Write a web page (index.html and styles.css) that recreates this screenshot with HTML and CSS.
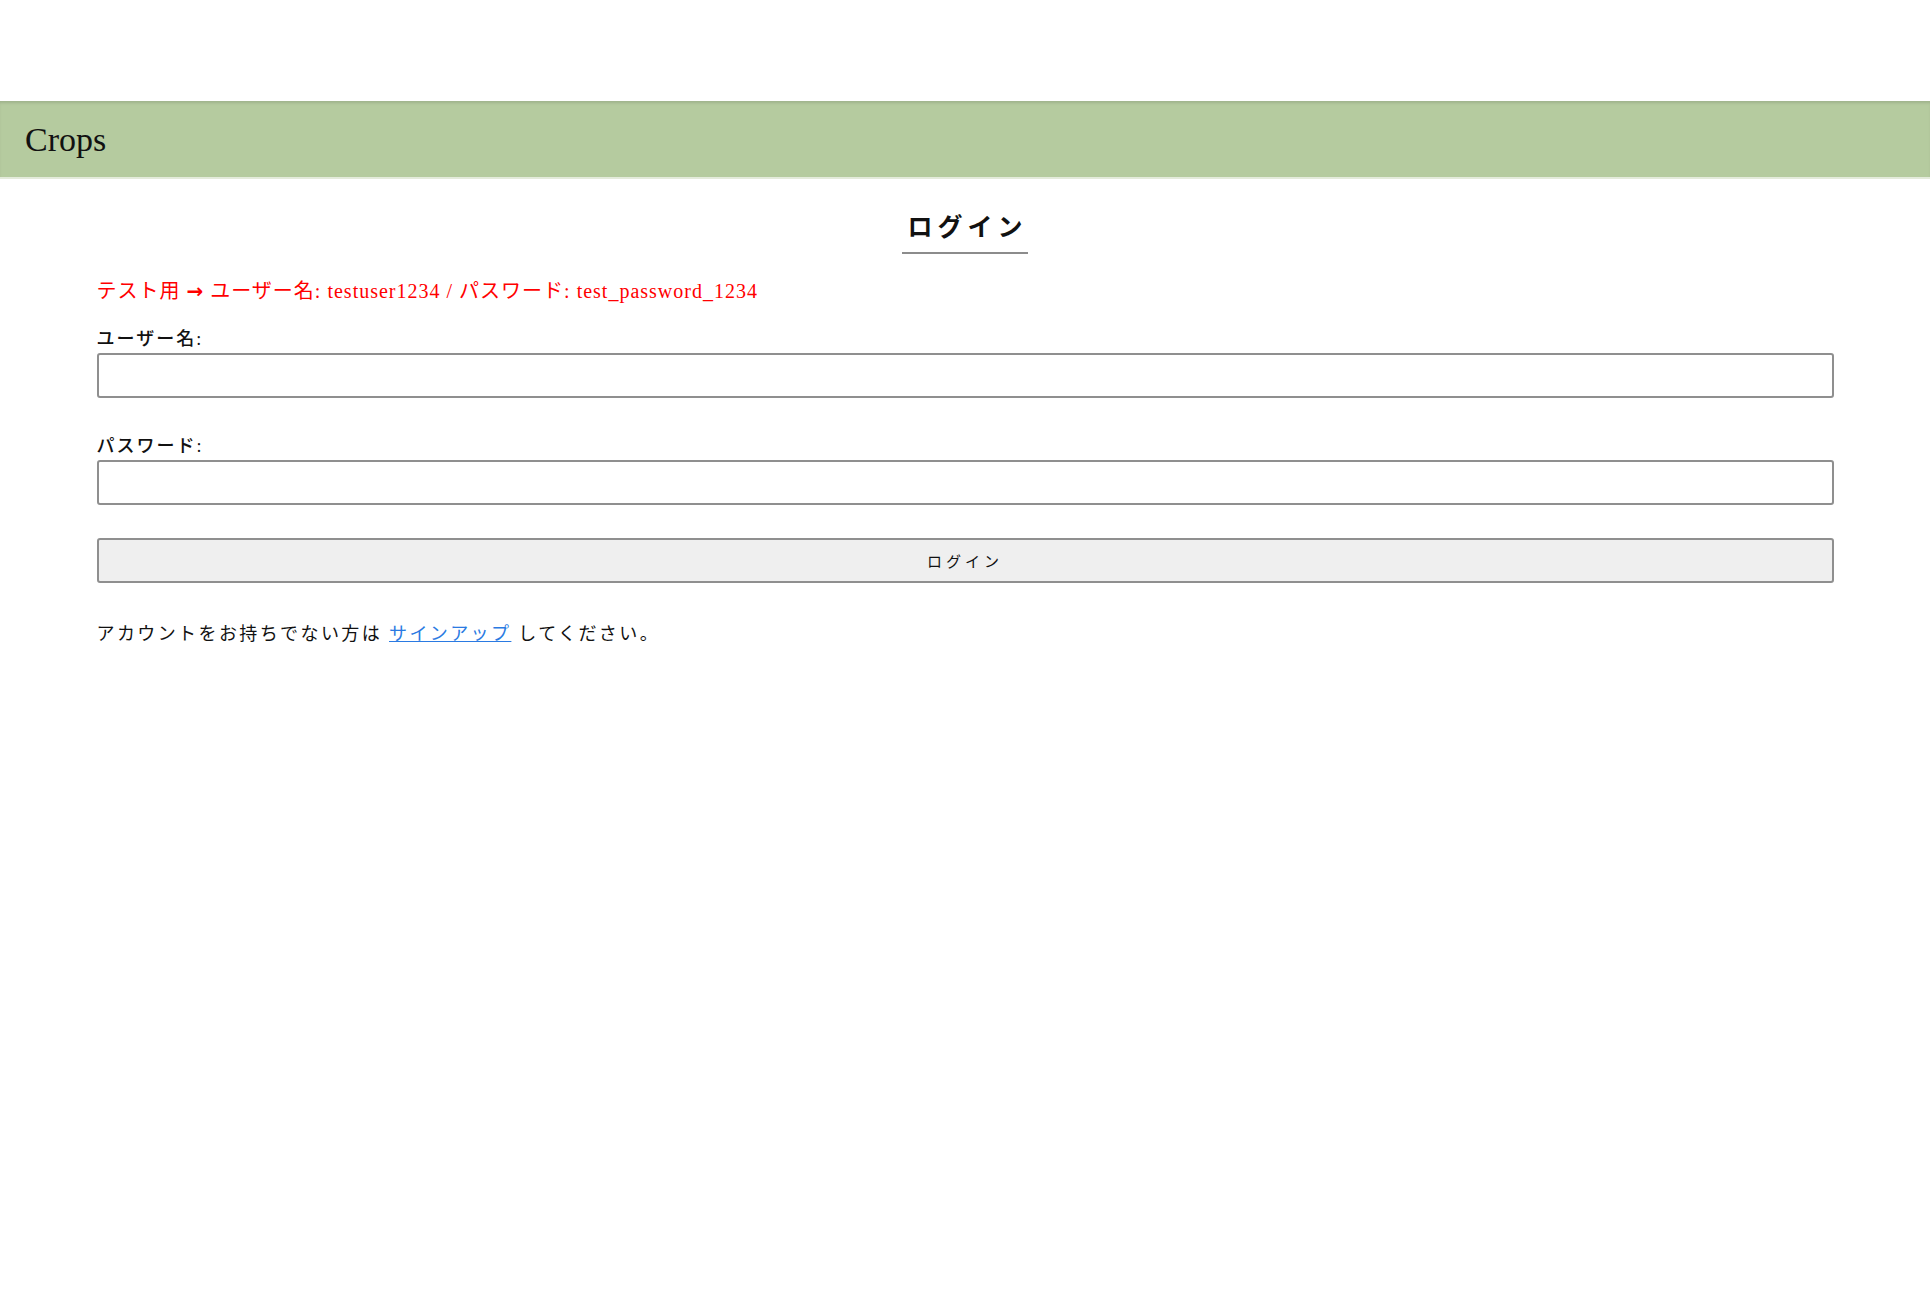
FILE: index.html
```
<!DOCTYPE html>
<html lang="ja">
<head>
    <meta charset="UTF-8">
    <meta name="viewport" content="width=device-width, initial-scale=1.0">
    <title>ログイン - Crops</title>
    <link rel="stylesheet" href="styles.css">
</head>
<body>
    <header class="site-header">
        <span class="site-title">Crops</span>
    </header>

    <main class="login-box">
        <div class="login-heading">
            <h2 class="login-title">ログイン</h2>
        </div>

        <p class="test-note">テスト用 <span class="note-arrow">→</span> ユーザー名: testuser1234 / パスワード: test_password_1234</p>

        <form class="login-form" onsubmit="return false;">
            <label class="form-label" for="username">ユーザー名:</label>
            <input class="form-input" type="text" id="username" name="username">

            <label class="form-label form-label-second" for="password">パスワード:</label>
            <input class="form-input" type="password" id="password" name="password">

            <button class="login-button" type="submit">ログイン</button>
        </form>

        <p class="signup-text">アカウントをお持ちでない方は <a href="#" class="signup-link">サインアップ</a> してください。</p>
    </main>
</body>
</html>
```

FILE: styles.css
```
body {
    margin: 0;
    padding-top: 101px;
    font-family: "Liberation Serif", "Noto Sans CJK JP", serif;
    color: #111;
    background: #fff;
}
.site-header {
    background: #b5cb9f;
    height: 76px;
    display: flex;
    align-items: center;
    padding: 0 25px;
    box-shadow: inset 0 3px 3px -1px rgba(0, 0, 0, 0.12), 0 2px 0 #e4ebdb;
}
.site-title {
    font-size: 34px;
    color: #111;
    padding-top: 2px;
}
.login-box {
    width: 90%;
    margin: 0 auto;
}
.login-heading {
    text-align: center;
    margin-top: 33px;
}
.login-title {
    display: inline-block;
    margin: 0;
    font-size: 25px;
    line-height: 36px;
    font-weight: bold;
    letter-spacing: 5px;
    padding: 0 0 6px 5px;
    border-bottom: 2px solid #8c8c8c;
}
.test-note {
    color: #ff0000;
    font-size: 20px;
    line-height: 30px;
    letter-spacing: 1px;
    margin: 22px 0 0;
}
.note-arrow {
    font-family: "DejaVu Sans", sans-serif;
    font-weight: bold;
}
.login-form {
    display: flex;
    flex-direction: column;
    margin-top: 21px;
}
.form-label {
    font-size: 18px;
    line-height: 24px;
    letter-spacing: 2px;
    font-weight: 500;
}
.form-label-second {
    margin-top: 36px;
}
.form-input {
    box-sizing: border-box;
    height: 45px;
    margin-top: 2px;
    border: 2px solid #8f8f8f;
    border-radius: 3px;
    font-size: 18px;
    padding: 0 8px;
}
.login-button {
    box-sizing: border-box;
    height: 45px;
    margin-top: 33px;
    background: #efefef;
    border: 2px solid #8f8f8f;
    border-radius: 3px;
    font-family: "Liberation Serif", "Noto Sans CJK JP", serif;
    font-size: 15px;
    letter-spacing: 4px;
    color: #111;
}
.signup-text {
    font-size: 18px;
    line-height: 30px;
    letter-spacing: 2.4px;
    margin: 36px 0 0;
}
.signup-link {
    color: #2a7ae2;
    text-decoration: underline;
}
```
